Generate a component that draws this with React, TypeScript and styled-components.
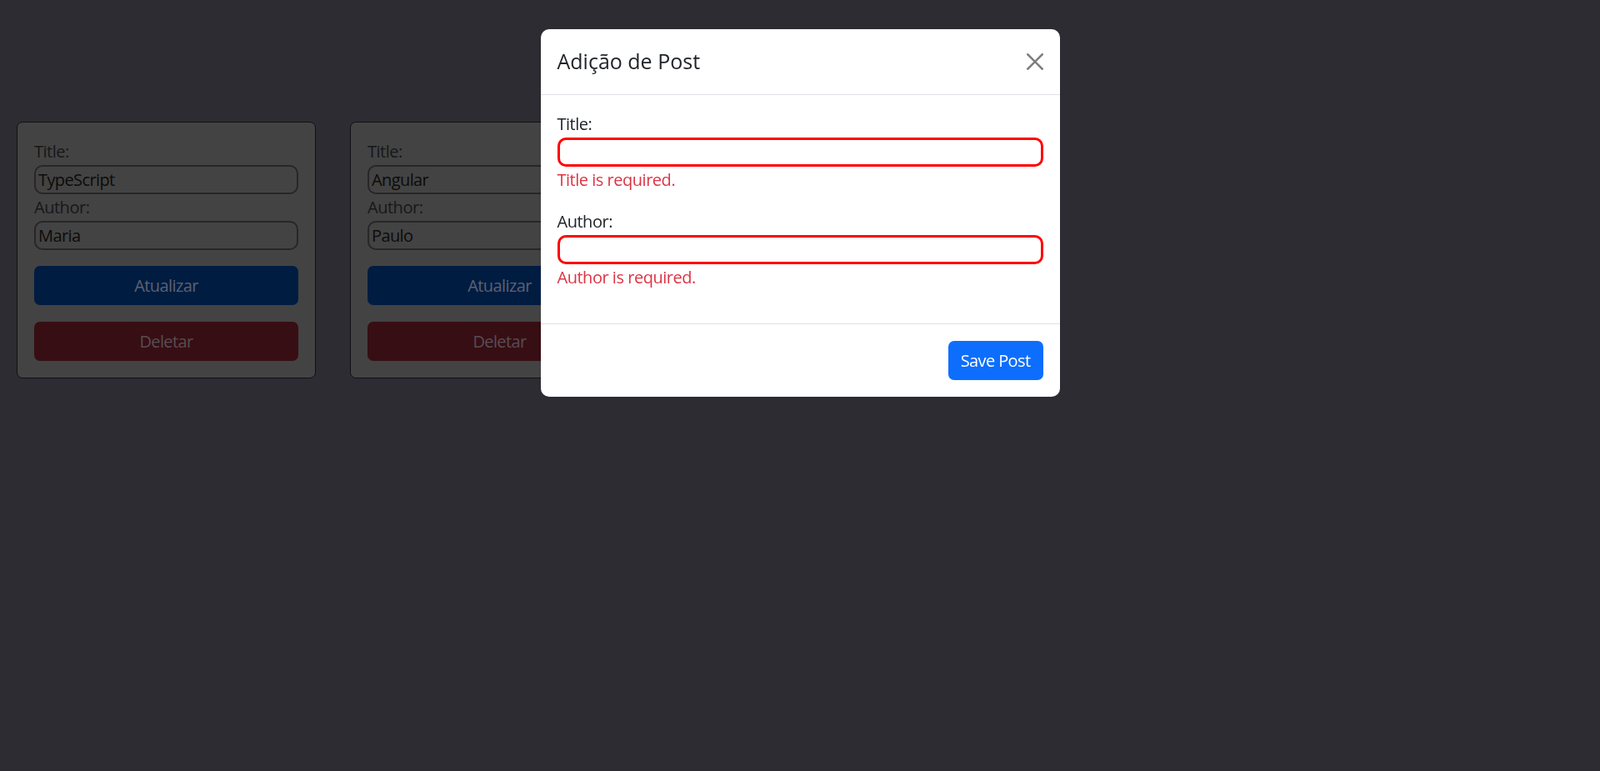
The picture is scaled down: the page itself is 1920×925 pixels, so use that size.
import React from "react";
import styled, { createGlobalStyle } from "styled-components";

const GlobalStyle = createGlobalStyle`
  html, body {
    margin: 0;
    padding: 0;
    background: #2d2c33;
    font-family: "Segoe UI", "Open Sans", "Noto Sans", sans-serif;
    letter-spacing: -0.03em;
  }
  * { box-sizing: border-box; }
`;

const Page = styled.div`
  min-height: 925px;
`;

const CardList = styled.div`
  display: flex;
  align-items: flex-start;
  gap: 41px;
  padding: 146px 0 0 20px;
`;

const PostCard = styled.div`
  width: 359px;
  padding: 20px;
  background: #434343;
  border: 1px solid #111113;
  border-radius: 7px;
`;

const CardLabel = styled.label`
  display: block;
  font-size: 20px;
  line-height: 30px;
  color: #16171a;
`;

const CardInput = styled.input`
  display: block;
  width: 100%;
  height: 35px;
  margin: 1px 0;
  padding: 0 3px;
  font: inherit;
  font-size: 20px;
  letter-spacing: -0.03em;
  color: #0d0b0a;
  background: transparent;
  border: 2px solid #272727;
  border-radius: 10px;
  outline: none;
`;

const ActionButton = styled.button<{ $variant: "primary" | "danger" }>`
  display: block;
  width: 100%;
  height: 47px;
  margin-top: 19px;
  border: none;
  border-radius: 7px;
  font: inherit;
  font-size: 20px;
  letter-spacing: -0.03em;
  background: ${(p) => (p.$variant === "primary" ? "#001c41" : "#370e13")};
  color: ${(p) => (p.$variant === "primary" ? "#5b6273" : "#574d53")};
  cursor: pointer;

  & + & {
    margin-top: 20px;
  }
`;

const ModalLayer = styled.div`
  position: fixed;
  inset: 0;
  display: flex;
  justify-content: center;
  align-items: flex-start;
  padding-top: 35px;
`;

const ModalDialog = styled.div`
  width: 623px;
  background: #ffffff;
  border-radius: 10px;
  overflow: hidden;
  color: #212529;
`;

const ModalHeader = styled.div`
  display: flex;
  align-items: center;
  justify-content: space-between;
  padding: 20px;
  border-bottom: 1px solid #dee2e6;
`;

const ModalTitle = styled.h5`
  margin: 0;
  font-size: 25px;
  line-height: 37.5px;
  font-weight: 500;
  letter-spacing: 0;
  color: #212529;
`;

const CloseButton = styled.button`
  display: flex;
  align-items: center;
  justify-content: center;
  width: 30px;
  height: 30px;
  margin-right: -5px;
  padding: 0;
  border: none;
  background: transparent;
  opacity: 0.5;
  cursor: pointer;
`;

const ModalBody = styled.div`
  padding: 20px;
`;

const FormGroup = styled.div`
  margin-bottom: 20px;
`;

const FieldLabel = styled.label`
  display: block;
  font-size: 20px;
  line-height: 30px;
  color: #212529;
`;

const FieldInput = styled.input<{ $invalid?: boolean }>`
  display: block;
  width: 100%;
  height: 35px;
  margin: 1px 0 0;
  padding: 0 4px;
  font: inherit;
  font-size: 20px;
  background: #ffffff;
  border: 3px solid ${(p) => (p.$invalid ? "#ff0000" : "#767676")};
  border-radius: 10px;
  outline: none;
`;

const Feedback = styled.div`
  margin-top: 1px;
  font-size: 20px;
  line-height: 30px;
  color: #dc3545;
`;

const ModalFooter = styled.div`
  display: flex;
  justify-content: flex-end;
  padding: 15px;
  border-top: 1px solid #dee2e6;
`;

const SaveButton = styled.button`
  height: 47px;
  margin: 5px;
  padding: 0 15px;
  border: none;
  border-radius: 7px;
  background: #0d6efd;
  color: #ffffff;
  font: inherit;
  font-size: 20px;
  letter-spacing: -0.03em;
  cursor: pointer;
`;

const posts = [
  { title: "TypeScript", author: "Maria" },
  { title: "Angular", author: "Paulo" },
];

export default function App() {
  return (
    <Page>
      <GlobalStyle />
      <CardList>
        {posts.map((p) => (
          <PostCard key={p.title}>
            <CardLabel>Title:</CardLabel>
            <CardInput defaultValue={p.title} />
            <CardLabel>Author:</CardLabel>
            <CardInput defaultValue={p.author} />
            <ActionButton $variant="primary">Atualizar</ActionButton>
            <ActionButton $variant="danger">Deletar</ActionButton>
          </PostCard>
        ))}
      </CardList>
      <ModalLayer>
        <ModalDialog>
          <ModalHeader>
            <ModalTitle>Adição de Post</ModalTitle>
            <CloseButton aria-label="Close">
              <svg width="20" height="20" viewBox="0 0 16 16" fill="#000">
                <path d="M.293.293a1 1 0 0 1 1.414 0L8 6.586 14.293.293a1 1 0 1 1 1.414 1.414L9.414 8l6.293 6.293a1 1 0 0 1-1.414 1.414L8 9.414l-6.293 6.293a1 1 0 0 1-1.414-1.414L6.586 8 .293 1.707a1 1 0 0 1 0-1.414z" />
              </svg>
            </CloseButton>
          </ModalHeader>
          <ModalBody>
            <FormGroup>
              <FieldLabel>Title:</FieldLabel>
              <FieldInput $invalid />
              <Feedback>Title is required.</Feedback>
            </FormGroup>
            <FormGroup>
              <FieldLabel>Author:</FieldLabel>
              <FieldInput $invalid />
              <Feedback>Author is required.</Feedback>
            </FormGroup>
          </ModalBody>
          <ModalFooter>
            <SaveButton>Save Post</SaveButton>
          </ModalFooter>
        </ModalDialog>
      </ModalLayer>
    </Page>
  );
}
